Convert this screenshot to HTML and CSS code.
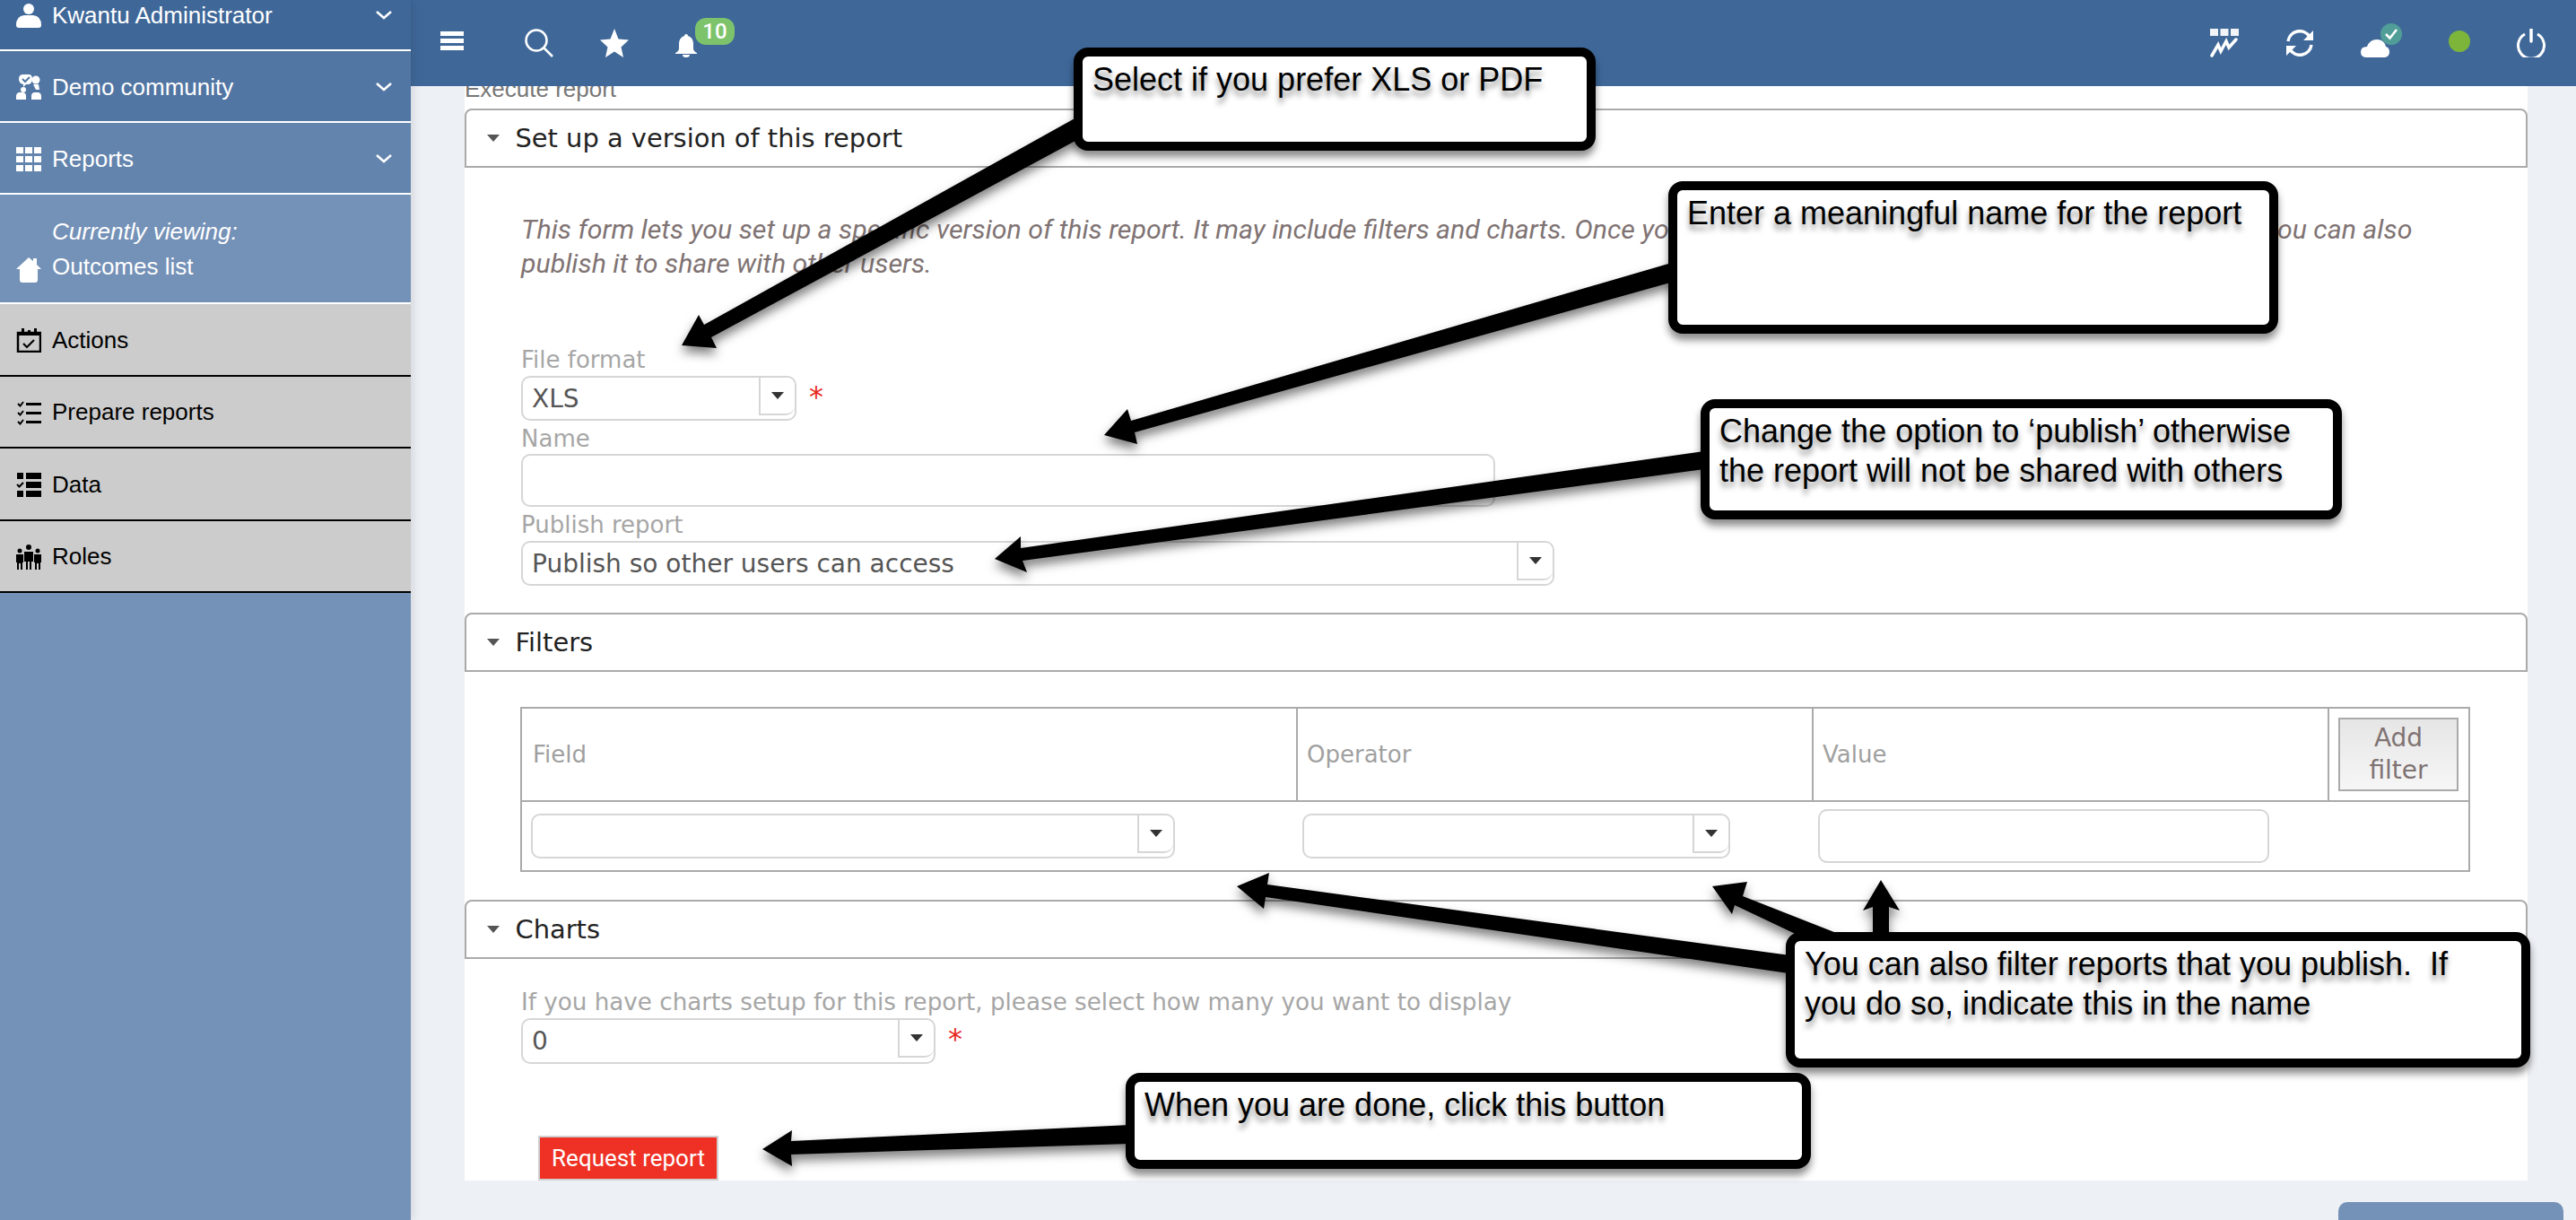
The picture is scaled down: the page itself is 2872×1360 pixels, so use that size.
FILE: index.html
```html
<!DOCTYPE html>
<html lang="en">
<head>
    <meta charset="UTF-8">
    <title>Execute report</title>
    <link rel="stylesheet" href="styles.css">
</head>
<body>
<div class="app">
    <nav class="sidebar">
        <div class="nav-row tone-1">
            <svg class="nav-icon" viewBox="0 0 28 28"><circle cx="14" cy="7" r="6" fill="#fff"/><path d="M0 25q0-10 9-11h10q9 1 9 11q0 3-3 3H3q-3 0-3-3z" fill="#fff"/></svg>
            <span>Kwantu Administrator</span>
            <svg class="chevron" viewBox="0 0 18 10"><path d="M1 1l8 7 8-7" fill="none" stroke="#fff" stroke-width="2.5"/></svg>
        </div>
        <div class="nav-row tone-2">
            <svg class="nav-icon" viewBox="0 0 28 28"><path d="M8 0h6q4 0 4 5t-4 6h-3l-3 3v-3q-5-1-5-6t5-5z" fill="#fff"/><path d="M7 5l3 3 5-5" fill="none" stroke="#5276a3" stroke-width="2"/><circle cx="8" cy="17" r="3" fill="#fff"/><circle cx="22" cy="6" r="4.500" fill="#fff"/><path d="M19 11h6l1 6h-4z" fill="#fff"/><path d="M0 28v-4q0-3 3-4h4q4 0 4 4v4zM17 28v-4q0-4 4-4h4q3 1 3 4v4z" fill="#fff"/></svg>
            <span>Demo community</span>
            <svg class="chevron" viewBox="0 0 18 10"><path d="M1 1l8 7 8-7" fill="none" stroke="#fff" stroke-width="2.5"/></svg>
        </div>
        <div class="nav-row tone-3">
            <svg class="nav-icon" viewBox="0 0 28 28"><path d="M0 1h8v7H0zM10 1h8v7h-8zM20 1h8v7h-8zM0 11h8v7H0zM10 11h8v7h-8zM20 11h8v7h-8zM0 21h8v7H0zM10 21h8v7h-8zM20 21h8v7h-8z" fill="#fff"/></svg>
            <span>Reports</span>
            <svg class="chevron" viewBox="0 0 18 10"><path d="M1 1l8 7 8-7" fill="none" stroke="#fff" stroke-width="2.5"/></svg>
        </div>
        <div class="nav-current">
            <em class="current-label">Currently viewing:</em>
            <div class="current-page">
                <svg class="nav-icon" viewBox="0 0 28 28"><path d="M14 0l5 4V1h4v7l5 5h-4v12q0 3-3 3H7q-3 0-3-3V13H0z" fill="#fff"/></svg>
                <span>Outcomes list</span>
            </div>
        </div>
        <div class="nav-row nav-grey">
            <svg class="nav-icon" viewBox="0 0 28 28"><rect x="2" y="6" width="25" height="21" fill="none" stroke="#000" stroke-width="2.5"/><path d="M2 6h25v3H2zM6 1h3v7H6zM20 1h3v7h-3zM13 3h3v3h-3z" fill="#000"/><path d="M8 18l4 4 8-8" fill="none" stroke="#000" stroke-width="2.2"/></svg>
            <span>Actions</span>
        </div>
        <div class="nav-row nav-grey">
            <svg class="nav-icon" viewBox="0 0 28 28"><path d="M2 4l2.500 2.500L8 2M2 14l2.500 2.500L8 12M2 24l2.500 2.500L8 22" fill="none" stroke="#000" stroke-width="2"/><path d="M11 3h17v3H11zM11 13h17v3H11zM11 23h17v3H11z" fill="#000"/></svg>
            <span>Prepare reports</span>
        </div>
        <div class="nav-row nav-grey">
            <svg class="nav-icon" viewBox="0 0 28 28"><path d="M1 1h7v7H1zM1 21h7v7H1zM11 1h17v7H11zM11 11h17v7H11zM11 21h17v7H11z" fill="#000"/><path d="M1 14l2.500 2.500L8 12" fill="none" stroke="#000" stroke-width="2"/></svg>
            <span>Data</span>
        </div>
        <div class="nav-row nav-grey">
            <svg class="nav-icon" viewBox="0 0 28 28"><circle cx="14" cy="3" r="3"/><circle cx="4" cy="7" r="2.500"/><circle cx="24" cy="7" r="2.500"/><path d="M9 8h10v11h-2v9h-2v-9h-2v9h-2v-9H9zM0 11h8v9H7v8H5v-7H3v7H1v-8H0zM20 11h8v9h-1v8h-2v-7h-2v7h-2v-8h-1z"/></svg>
            <span>Roles</span>
        </div>
    </nav>

    <div class="main">
        <header class="topbar">
            <div class="top-left">
                <svg class="icon-menu" viewBox="0 0 26 21"><path d="M0 0h26v5H0zM0 8h26v5H0zM0 16h26v5H0z" fill="#fff"/></svg>
                <svg class="top-icon" viewBox="0 0 32 32"><circle cx="13" cy="13" r="11.500" fill="none" stroke="#fff" stroke-width="2.500"/><path d="M21 21l10 10" stroke="#fff" stroke-width="2.500"/></svg>
                <svg class="top-icon" viewBox="0 0 32 32"><path d="M16 0l4.500 11.500L32 12.500l-8.500 8L26 32l-10-6.500L6 32l2.500-11.500L0 12.500l11.500-1z" fill="#fff"/></svg>
                <div class="bell">
                    <svg class="icon-bell" viewBox="0 0 24 26"><path d="M12 0q2 0 2 2q6 2 6 9v5q0 3 4 5v1H0v-1q4-2 4-5v-5q0-7 6-9q0-2 2-2z" fill="#fff"/><path d="M8 23h8q0 3-4 3t-4-3z" fill="#fff"/></svg>
                    <span class="badge">10</span>
                </div>
            </div>
            <div class="top-right">
                <svg class="top-icon" viewBox="0 0 32 32"><path d="M0 0h9v8H0zM11.500 0h9v8h-9zM23 0h9v8h-9z" fill="#f1f3f6"/><path d="M2 30L9 18l3 7 6-11 3 7 8-9" fill="none" stroke="#fff" stroke-width="3.500" stroke-linecap="round"/></svg>
                <svg class="top-icon" viewBox="0 0 32 32"><path d="M3 14A13 13 0 0 1 27 9M29 18A13 13 0 0 1 5 23" fill="none" stroke="#fff" stroke-width="3.500"/><path d="M31 2v11H20zM1 30V19h11z" fill="#fff"/></svg>
                <div class="cloud">
                    <svg class="top-icon" viewBox="0 0 32 32"><path d="M7 32q-7 0-7-6t7-6q3-8 11-8t10 8q4 1 4 6t-5 6z" fill="#fff"/></svg>
                    <span class="cloud-ok"><svg viewBox="0 0 24 24"><path d="M6 12l4.500 4.500L18 7" fill="none" stroke="#fff" stroke-width="2.500"/></svg></span>
                </div>
                <span class="status-dot"></span>
                <svg class="top-icon" viewBox="0 0 32 32"><path d="M9 6A14.500 14.500 0 1 0 23 6" fill="none" stroke="#fff" stroke-width="3"/><path d="M16 0v14" stroke="#fff" stroke-width="3.500" stroke-linecap="round"/></svg>
            </div>
        </header>

        <div class="content">
            <section class="panel">
                <div class="crumb">Execute report</div>

                <div class="section-head"><span class="caret"></span>Set up a version of this report</div>
                <p class="intro">This form lets you set up a specific version of this report. It may include filters and charts. Once you have saved this version of this you can run it and you can also<br>publish it to share with other users.</p>

                <label class="field-label label-first">File format</label>
                <div class="field-line">
                    <div class="select select-format"><span class="select-value">XLS</span><span class="select-btn"><i class="select-arrow"></i></span></div>
                    <span class="required">*</span>
                </div>
                <label class="field-label">Name</label>
                <div class="text-input input-name"></div>
                <label class="field-label">Publish report</label>
                <div class="select select-publish"><span class="select-value">Publish so other users can access</span><span class="select-btn"><i class="select-arrow"></i></span></div>

                <div class="section-head head-filters"><span class="caret"></span>Filters</div>
                <table class="filter-table">
                    <tr class="filter-head">
                        <th class="col-field">Field</th>
                        <th class="col-operator">Operator</th>
                        <th class="col-value">Value</th>
                        <th class="col-add"><button class="add-filter">Add filter</button></th>
                    </tr>
                    <tr class="filter-row">
                        <td class="cell-field"><div class="select select-field"><span class="select-value"></span><span class="select-btn"><i class="select-arrow"></i></span></div></td>
                        <td><div class="select select-operator"><span class="select-value"></span><span class="select-btn"><i class="select-arrow"></i></span></div></td>
                        <td><div class="text-input input-value"></div></td>
                        <td></td>
                    </tr>
                </table>

                <div class="section-head head-charts"><span class="caret"></span>Charts</div>
                <label class="field-label label-charts">If you have charts setup for this report, please select how many you want to display</label>
                <div class="field-line">
                    <div class="select select-charts"><span class="select-value">0</span><span class="select-btn"><i class="select-arrow"></i></span></div>
                    <span class="required">*</span>
                </div>
                <button class="request-btn">Request report</button>
            </section>
            <div class="bottom-btn"></div>
        </div>
    </div>
</div>

<!-- help annotations drawn over the page -->
<div class="annotations">
    <svg class="arrows" viewBox="0 0 2872 1360">
        <polygon points="760,385 799,388 793,376 1210,151 1200,131 785,362 779,351"/>
        <polygon points="1231,485 1268,495 1265,482 1873,312 1867,292 1261,469 1257,456"/>
        <polygon points="1109,623 1145,638 1140,625 1900,523 1900,503 1138,611 1138,598"/>
        <polygon points="1379,988 1409,1013 1411,1000 1994,1085 1996,1065 1413,986 1415,973"/>
        <polygon points="1909,988 1931,1019 1934,1009 2010,1045 2060,1045 1943,999 1948,983"/>
        <polygon points="2097,981 2118,1015 2106,1011 2106,1045 2088,1045 2088,1011 2077,1015"/>
        <polygon points="850,1281 883,1300 882,1287 1260,1275 1260,1254 882,1272 883,1260"/>
    </svg>
    <div class="callout callout-format">Select if you prefer XLS or PDF</div>
    <div class="callout callout-name">Enter a meaningful name for the report</div>
    <div class="callout callout-publish">Change the option to ‘publish’ otherwise<br>the report will not be shared with others</div>
    <div class="callout callout-filter">You can also filter reports that you publish.&nbsp; If<br>you do so, indicate this in the name</div>
    <div class="callout callout-done">When you are done, click this button</div>
</div>
</body>
</html>
```

FILE: styles.css
```css
html, body { margin: 0; height: 1360px; overflow: hidden; }
body { background: #edf0f5; font-family: "DejaVu Sans", sans-serif; position: relative; }
.app { display: flex; height: 1360px; }

/* sidebar */
.sidebar { width: 458px; flex: none; background: #7491b7; box-shadow: 2px 0 10px rgba(0,0,0,.12); font-family: "Liberation Sans", sans-serif; font-size: 26px; color: #fff; z-index: 2; }
.nav-row { height: 80px; box-sizing: border-box; border-bottom: 2px solid #fff; display: flex; align-items: center; padding: 2px 21px 0 18px; }
.nav-row span { margin-left: 12px; }
.nav-icon { width: 28px; height: 28px; flex: none; }
.chevron { width: 18px; height: 10px; margin-left: auto; }
.tone-1 { background: #3f6899; margin-top: -23px; }
.tone-2 { background: #5276a3; }
.tone-3 { background: #6384ad; }
.nav-current { height: 122px; box-sizing: border-box; border-bottom: 2px solid #fff; padding: 21px 18px 0; }
.current-label { display: block; margin-left: 40px; line-height: 40px; }
.current-page { display: flex; align-items: flex-end; margin-top: 1px; line-height: 36px; }
.current-page span { margin-left: 12px; }
.nav-grey { height: 80.5px; background: #ccc; color: #000; border-bottom-color: #000; }

/* top bar */
.main { flex: 1; display: flex; flex-direction: column; min-width: 0; }
.topbar { height: 96px; flex: none; background: #3f6899; display: flex; justify-content: space-between; align-items: flex-start; padding: 32px 34px 0 33px; box-sizing: border-box; z-index: 1; }
.top-left, .top-right { display: flex; align-items: flex-start; }
.top-icon { width: 32px; height: 32px; display: block; flex: none; }
.icon-menu { width: 26px; height: 21px; margin: 3px 68px 0 0; }
.top-left .top-icon { margin-right: 52px; }
.bell { position: relative; width: 24px; height: 26px; margin-top: 6px; }
.icon-bell { width: 24px; height: 26px; display: block; }
.badge { position: absolute; left: 22px; top: -18px; width: 44px; height: 30px; border-radius: 12px; background: #7dc36b; color: #fff; font: 500 24px/30px Roboto, sans-serif; text-align: center; }
.top-right { gap: 52px; }
.cloud { position: relative; width: 32px; height: 32px; }
.cloud-ok { position: absolute; left: 22px; top: -6px; width: 24px; height: 24px; border-radius: 50%; background: #519e98; }
.cloud-ok svg { display: block; width: 24px; height: 24px; }
.status-dot { width: 24px; height: 24px; margin: 2px 0 0 14px; border-radius: 50%; background: #7cb53a; }

/* report form */
.content { flex: 1; padding: 0 54px 0 60px; overflow: hidden; }
.panel { height: 1220px; background: #fff; overflow: hidden; }
.crumb { margin-top: -17px; height: 42px; line-height: 40px; font-family: "Liberation Sans", sans-serif; font-size: 26px; color: #777; }
.section-head { height: 66px; box-sizing: border-box; border: 2px solid #aaa; border-radius: 8px 8px 0 0; display: flex; align-items: center; padding-left: 23px; font-size: 28.9px; color: #222; }
.caret { width: 0; height: 0; border: 7px solid transparent; border-top: 8px solid #555; border-bottom: 0; margin-right: 17.5px; }
.head-filters { margin-top: 30px; }
.head-charts { margin-top: 31px; }
.intro { margin: 50px 0 71px 63px; font: italic 30.3px/38px Roboto, sans-serif; color: #7f7373; white-space: nowrap; }
.field-label { display: block; margin-left: 63px; height: 34px; line-height: 34px; font-size: 26px; color: #a6a6a6; }
.label-first { margin-bottom: 1px; }
.field-line { display: flex; align-items: flex-start; }
.select { display: flex; align-items: flex-start; margin-left: 63px; height: 50px; box-sizing: border-box; border: 2px solid #d6d6d6; border-radius: 10px; font-size: 28px; color: #555; }
.select-value { flex: 1; line-height: 48px; padding-left: 10px; white-space: nowrap; }
.select-btn { width: 40px; height: 42px; box-sizing: border-box; border-left: 2px solid #d6d6d6; border-bottom: 2px solid #d6d6d6; border-radius: 0 0 10px 0; display: flex; align-items: center; justify-content: center; }
.select-arrow { width: 0; height: 0; border: 7px solid transparent; border-top: 8px solid #333; border-bottom: 0; }
.select-format { width: 307px; margin-bottom: 3px; }
.select-publish { width: 1152px; margin-top: 1px; }
.select-charts { width: 462px; height: 51px; }
.select-field { width: 718px; margin: 0; }
.select-operator { width: 477px; margin: 0; }
.required { margin: 3px 0 0 14px; font-size: 32px; line-height: 40px; color: #e8261c; }
.text-input { height: 60px; box-sizing: border-box; border: 2px solid #d6d6d6; border-radius: 10px; }
.input-name { width: 1086px; height: 59px; margin: 0 0 3px 63px; }
.input-value { width: 503px; }

.filter-table { width: 2172px; margin: 39px 0 0 62px; border-collapse: collapse; table-layout: fixed; border: 2px solid #aaa; }
.filter-table th, .filter-table td { box-sizing: border-box; border-top: 2px solid #aaa; border-bottom: 2px solid #aaa; padding: 0 6px; }
.filter-table th { height: 104px; padding: 0 10px; border-left: 2px solid #aaa; text-align: left; font-weight: normal; font-size: 26px; color: #a0a0a0; }
.filter-row td { height: 78px; }
.filter-table .cell-field { padding: 0 10px; }
.filter-table .col-field { width: 865px; padding-left: 12px; }
.col-operator { width: 575px; }
.col-value { width: 575px; }
.col-add { width: 157px; }
.add-filter { display: block; width: 134px; height: 82px; padding: 0 20px; box-sizing: border-box; border: 2px solid #aaa; background: linear-gradient(#e6e6e6, #f6f6f6); color: #7f7373; font: 28px/36px "DejaVu Sans", sans-serif; }
.label-charts { margin: 31px 0 1px 63px; font-size: 26.2px; }
.request-btn { display: block; width: 201px; height: 50px; margin: 80px 0 0 82px; padding: 0; border: 2px solid #d0d0d0; background: #ee3124; color: #fff; font: 26px Roboto, sans-serif; }
.bottom-btn { width: 251px; height: 60px; margin: 24px -40px 0 auto; border-radius: 10px 10px 0 0; background: #7491b7; }

/* annotations */
.annotations { position: absolute; left: 0; top: 0; width: 2872px; height: 1360px; z-index: 5; }
.arrows { position: absolute; left: 0; top: 0; width: 2872px; height: 1360px; filter: drop-shadow(0 7px 6px rgba(0,0,0,.5)); }
.callout { position: absolute; box-sizing: border-box; padding: 4px 11px; background: #fff; border: 10px solid #000; border-radius: 16px; box-shadow: 0 7px 9px rgba(0,0,0,.45); font: 36px/44px "Liberation Sans", sans-serif; color: #000; text-shadow: 0 6px 6px rgba(0,0,0,.45); white-space: nowrap; }
.callout-format { left: 1197px; top: 53px; width: 582px; height: 115px; }
.callout-name { left: 1860px; top: 202px; width: 680px; height: 170px; }
.callout-publish { left: 1896px; top: 445px; width: 715px; height: 134px; }
.callout-filter { left: 1991px; top: 1039px; width: 830px; height: 151px; }
.callout-done { left: 1255px; top: 1196px; width: 764px; height: 107px; }
```
